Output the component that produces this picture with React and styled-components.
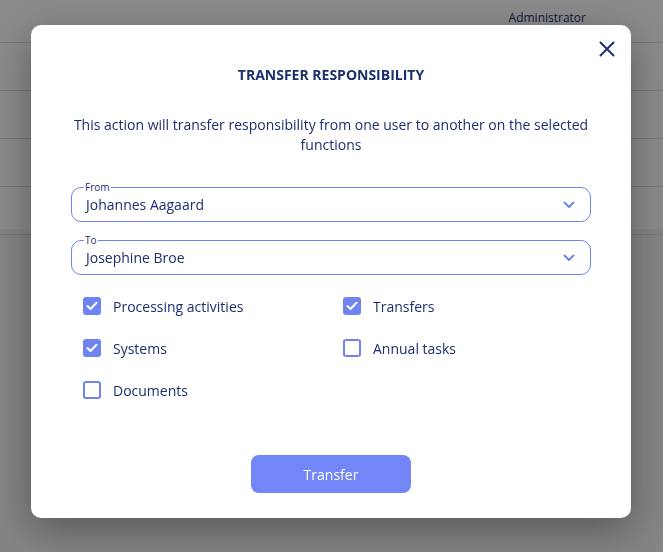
import React, { useState } from "react";
import styled, { createGlobalStyle } from "styled-components";

const GlobalStyle = createGlobalStyle`
  * { box-sizing: border-box; }
  html, body { margin: 0; padding: 0; }
  body {
    font-family: "Open Sans", "Noto Sans", sans-serif;
    color: #1c2f6e;
    background: #f6f6f8;
    overflow: hidden;
  }
`;

const functionsList = [
  { id: "processing", label: "Processing activities", checked: true },
  { id: "transfers", label: "Transfers", checked: true },
  { id: "systems", label: "Systems", checked: true },
  { id: "annual", label: "Annual tasks", checked: false },
  { id: "documents", label: "Documents", checked: false },
];

const App = () => {
  const [checked, setChecked] = useState(
    Object.fromEntries(functionsList.map((f) => [f.id, f.checked]))
  );

  return (
    <>
      <GlobalStyle />
      <Page>
        <TopBar>
          <UserName>Administrator</UserName>
        </TopBar>
        <TableArea>
          <Row />
          <Row />
          <Row />
          <Row />
        </TableArea>
      </Page>

      <Overlay>
        <Modal>
          <CloseButton aria-label="Close">
            <svg width="16" height="16" viewBox="0 0 16 16">
              <path
                d="M1.5 1.5 L14.5 14.5 M14.5 1.5 L1.5 14.5"
                stroke="#1c3370"
                strokeWidth="2"
                strokeLinecap="round"
                fill="none"
              />
            </svg>
          </CloseButton>
          <Title>TRANSFER RESPONSIBILITY</Title>
          <Description>
            This action will transfer responsibility from one user to another on the selected
            functions
          </Description>

          <Fields>
            <SelectBox>
              <FloatLabel>From</FloatLabel>
              <SelectValue>Johannes Aagaard</SelectValue>
              <Chevron />
            </SelectBox>
            <SelectBox>
              <FloatLabel>To</FloatLabel>
              <SelectValue>Josephine Broe</SelectValue>
              <Chevron />
            </SelectBox>
          </Fields>

          <CheckGrid>
            {functionsList.map((f) => (
              <CheckItem
                key={f.id}
                onClick={() => setChecked({ ...checked, [f.id]: !checked[f.id] })}
              >
                <Box $checked={checked[f.id]}>
                  {checked[f.id] && (
                    <svg width="12" height="10" viewBox="0 0 12 10">
                      <path
                        d="M1.5 5 L4.5 8 L10.5 1.8"
                        stroke="#fff"
                        strokeWidth="2"
                        strokeLinecap="round"
                        strokeLinejoin="round"
                        fill="none"
                      />
                    </svg>
                  )}
                </Box>
                <CheckLabel>{f.label}</CheckLabel>
              </CheckItem>
            ))}
          </CheckGrid>

          <Footer>
            <PrimaryButton>Transfer</PrimaryButton>
          </Footer>
        </Modal>
      </Overlay>
    </>
  );
};

export default App;

const Chevron = () => (
  <ChevronWrap>
    <svg width="12" height="8" viewBox="0 0 12 8">
      <path
        d="M1.5 1.5 L6 6 L10.5 1.5"
        stroke="#7083f2"
        strokeWidth="2"
        strokeLinecap="round"
        strokeLinejoin="round"
        fill="none"
      />
    </svg>
  </ChevronWrap>
);

const Page = styled.div`
  width: 100vw;
  height: 100vh;
  background: #f4f4f6;
`;

const TopBar = styled.div`
  height: 43px;
  display: flex;
  justify-content: flex-end;
  align-items: flex-start;
  padding: 9px 77px 0 0;
  background: #ffffff;
  border-bottom: 1px solid #d3d6f5;
`;

const UserName = styled.span`
  font-size: 12px;
  color: #1c2f6e;
`;

const TableArea = styled.div`
  background: #ffffff;
  height: 186px;
`;

const Row = styled.div`
  height: 48px;
  border-bottom: 1px solid #d3d6f5;
`;

const Overlay = styled.div`
  position: fixed;
  inset: 0;
  background: rgba(0, 0, 0, 0.46);
  display: flex;
  justify-content: center;
  align-items: flex-start;
  padding: 25px 1px 0 0;
`;

const Modal = styled.div`
  position: relative;
  width: 600px;
  height: 493px;
  background: #ffffff;
  border-radius: 10px;
  box-shadow: 0 12px 40px rgba(0, 0, 0, 0.35);
  padding: 40px 40px 25px;
  display: flex;
  flex-direction: column;
`;

const CloseButton = styled.button`
  position: absolute;
  top: 16px;
  right: 16px;
  width: 16px;
  height: 16px;
  padding: 0;
  border: none;
  background: none;
  cursor: pointer;
  display: flex;
`;

const Title = styled.h2`
  margin: 0;
  text-align: center;
  font-size: 14px;
  font-weight: 700;
  color: #1c2f6e;
  line-height: 20px;
`;

const Description = styled.p`
  margin: 30px 0 0;
  text-align: center;
  font-size: 14px;
  line-height: 20px;
  color: #1c2f6e;
`;

const Fields = styled.div`
  margin-top: 32px;
  display: flex;
  flex-direction: column;
  gap: 18px;
`;

const SelectBox = styled.div`
  position: relative;
  height: 35px;
  border: 1px solid #7083f2;
  border-radius: 10px;
  display: flex;
  align-items: center;
  justify-content: space-between;
  padding: 0 14px 0 14px;
`;

const FloatLabel = styled.span`
  position: absolute;
  top: -8px;
  left: 12px;
  padding: 0 1px;
  background: #ffffff;
  font-size: 10px;
  line-height: 14px;
  color: #1c2f6e;
`;

const SelectValue = styled.span`
  font-size: 14px;
  color: #1c2f6e;
`;

const ChevronWrap = styled.span`
  display: flex;
  margin-right: 1px;
`;

const CheckGrid = styled.div`
  margin-top: 22px;
  padding-left: 12px;
  display: grid;
  grid-template-columns: 260px 1fr;
  row-gap: 24px;
`;

const CheckItem = styled.label`
  display: flex;
  align-items: center;
  gap: 12px;
  cursor: pointer;
  height: 18px;
`;

const Box = styled.span`
  width: 18px;
  height: 18px;
  border-radius: 3px;
  border: 2px solid #7083f2;
  background: ${(p) => (p.$checked ? "#7083f2" : "#ffffff")};
  display: flex;
  align-items: center;
  justify-content: center;
`;

const CheckLabel = styled.span`
  font-size: 14px;
  color: #1c2f6e;
`;

const Footer = styled.div`
  margin-top: auto;
  display: flex;
  justify-content: center;
`;

const PrimaryButton = styled.button`
  width: 160px;
  height: 38px;
  border: none;
  border-radius: 8px;
  background: #7286f8;
  color: #ffffff;
  font-family: inherit;
  font-size: 14px;
  cursor: pointer;
`;
